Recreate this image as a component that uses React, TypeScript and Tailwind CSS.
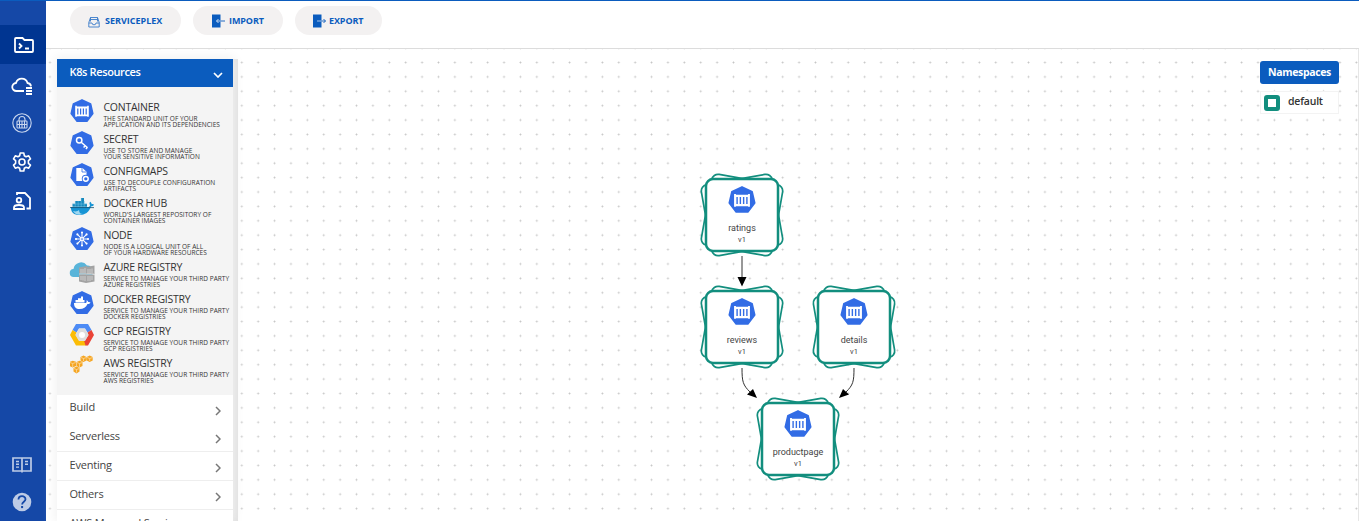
import React from 'react';

const F = "font-['Open_Sans',sans-serif]";

function Heptagon({ children, className }: { children?: React.ReactNode; className: string }) {
  return (
    <svg viewBox="0 0 24 24" className={className}>
      <path d="M12 .8 20.700 5 22.900 14.600 17 22.300H7L1.100 14.600 3.300 5Z" fill="#326ce5" stroke="#326ce5" strokeWidth="1.4" strokeLinejoin="round" />
      {children}
    </svg>
  );
}

function ContainerIcon({ className }: { className: string }) {
  return (
    <Heptagon className={className}>
      <path d="M5.200 6.800h1.600v.7h10.400v-.7h1.600V17.800h-1.600v-.5H6.800v.5H5.200Z" fill="#fff" />
      <path d="M7.800 9.500v6M10.600 9.500v6M13.400 9.500v6M16.200 9.500v6" stroke="#326ce5" strokeWidth="1.200" />
    </Heptagon>
  );
}

function Whale() {
  return (
    <svg viewBox="0 0 24 24" className="size-6">
      <path d="M1 12h17c1 0 2-.5 2-2-.7-1-.8-2 .2-3.200 1 .8 1.400 1.600 1.500 2.400 1-.2 1.800 0 2.300.5-.6 1.300-1.600 1.700-3 1.700C19 17 15 20 9.500 20 4 20 .6 17.500 1 12Z" fill="#1794d4" />
      <path d="M2.500 8.800h14.500v3H2.500ZM5.200 6h9v2.800h-9ZM11 3h3v3h-3Z" fill="#1689bd" />
      <path d="M5.200 6v6M8.200 6v6M11.200 3v9M14.200 6v6M2 9h15" stroke="#8ed0ee" strokeWidth=".4" />
      <path d="M0 12.600h24" stroke="#164e6d" strokeWidth=".8" />
      <path d="M3 16c3 1 5 0 6-1 0 3 2 4 4 4-5 2-8 0-10-3Z" fill="#9ed7f1" />
    </svg>
  );
}

function ResourceIcon({ kind }: { kind: string }) {
  if (kind === 'CONTAINER') return <ContainerIcon className="size-6" />;
  if (kind === 'DOCKER HUB') return <Whale />;
  if (kind === 'SECRET')
    return (
      <Heptagon className="size-6">
        <g fill="none" stroke="#fff" strokeWidth="1.500">
          <circle cx="9.200" cy="9.200" r="2.700" />
          <path d="m11.200 11.200 6.400 5.600M15.200 14.700l-1.600 1.700M17.200 16.500l-1.300 1.400" />
        </g>
      </Heptagon>
    );
  if (kind === 'CONFIGMAPS')
    return (
      <Heptagon className="size-6">
        <path d="M6.300 5h6.200l4 3.800V18H6.300Z" fill="#fff" />
        <path d="M12 5v4h4" fill="none" stroke="#326ce5" strokeWidth=".8" />
        <circle cx="15.800" cy="15.800" r="4" fill="#326ce5" />
        <circle cx="15.800" cy="15.800" r="2.400" fill="none" stroke="#fff" strokeWidth="1.500" />
      </Heptagon>
    );
  if (kind === 'NODE')
    return (
      <Heptagon className="size-6">
        <g stroke="#fff" strokeWidth="1.100" fill="#fff">
          <path d="M12 5v14M5.500 12h13M7.400 7.400l9.200 9.200M16.600 7.400l-9.200 9.200" />
          <circle cx="12" cy="12" r="1.400" fill="#326ce5" />
          <circle cx="12" cy="5.500" r=".5" /><circle cx="12" cy="18.500" r=".5" />
          <circle cx="6" cy="12" r=".5" /><circle cx="18" cy="12" r=".5" />
          <circle cx="7.400" cy="7.400" r=".5" /><circle cx="16.600" cy="7.400" r=".5" />
          <circle cx="7.400" cy="16.600" r=".5" /><circle cx="16.600" cy="16.600" r=".5" />
        </g>
      </Heptagon>
    );
  if (kind === 'AZURE REGISTRY')
    return (
      <svg viewBox="0 0 24 24" className="h-6 w-6 overflow-visible">
        <path d="M4 18a4 4 0 0 1-.5-8A7.500 7.500 0 0 1 17 6.500a5 5 0 0 1 5.500 5V18Z" fill="#59b4d9" />
        <path d="m9 8.500 8-1.500v7.500H9ZM16 8l8.500-1.500v8.500H16ZM9 15.500l7-.5v9l-7-1.500ZM16 15.500h8.500v7L16 24Z" fill="#a3a3a3" />
        <path d="M11 10v4.500M13 10v4.500M15 9v5.500M18 10v5M20 10v5M22 9.500v5M11 17v4M13 17v4.500M15 17v5M18 17v5M20 17v5M22 17v4M9 15h15" stroke="#e2e2e2" strokeWidth=".7" />
      </svg>
    );
  if (kind === 'DOCKER REGISTRY')
    return (
      <Heptagon className="size-6">
        <path d="M4 12h11.500c1 0 1.500-1.500 1-2.800 1 .3 1.600 1 1.700 1.800 1-.2 1.800 0 2.300.4-.6 1.400-1.600 1.600-3 1.600C16 16.500 13.500 18 9.500 18 6 18 4 16 4 12ZM5.500 9h9v2.500h-9ZM8 7.200h4.500V9H8ZM11 5.500h2V9h-2Z" fill="#fff" />
      </Heptagon>
    );
  if (kind === 'GCP REGISTRY')
    return (
      <svg viewBox="0 0 24 24" className="size-6">
        <path d="M6 1h12l3.500 6-4 2.500-2.500-4H9L6.500 9.500 2.500 7Z" fill="#4c8bf5" />
        <path d="m2.500 7 4 2.500L5.500 12 9 17.500h6l1.500 5H6L0 12Z" fill="#fbbc05" />
        <path d="m21.500 7 2.500 5-6 10.500h-2.500L14 17.500h1l3.500-5.500-1-2.500Z" fill="#ea4335" />
        <path d="M9 5.500h6l3.500 6.500-3.500 6H9L5.500 12Z" fill="#dedede" />
        <circle cx="12" cy="12" r="3" fill="#fff" />
      </svg>
    );
  return (
    <svg viewBox="0 0 24 24" className="size-6">
      <path d="m-.5 7 3.300-1.200L6 6.800V11l-3.300 1.500L-.5 11ZM6.500 7l3-1.200 3 1V11l-3 1.500-3-1.500ZM3.500 13l3-1.500 3 1.500v3.500l-3 2-3-2ZM10.500 2l3-1.500 3 1.500v3.500l-3 1.500-3-1.500ZM16.700 2l3-1.500 3 1.500v3.500l-3 1.500-3-1.500Z" fill="#f5a623" />
      <path d="m0 7.500 2.700 1 3-1M2.700 8.500V12M7 7.500l2.500 1 3-1M9.500 8.500V12M4 13.500l2.500 1 3-1M6.500 14.500v3M11 2.500l2.500 1 3-1M13.500 3.500V6M17.200 2.500l2.500 1 3-1M19.700 3.500V6" fill="none" stroke="#fce0b2" strokeWidth=".7" />
    </svg>
  );
}

const resources: [string, string, string][] = [
  ['CONTAINER', 'THE STANDARD UNIT OF YOUR', 'APPLICATION AND ITS DEPENDENCIES'],
  ['SECRET', 'USE TO STORE AND MANAGE', 'YOUR SENSITIVE INFORMATION'],
  ['CONFIGMAPS', 'USE TO DECOUPLE CONFIGURATION', 'ARTIFACTS'],
  ['DOCKER HUB', "WORLD'S LARGEST REPOSITORY OF", 'CONTAINER IMAGES'],
  ['NODE', 'NODE IS A LOGICAL UNIT OF ALL', 'OF YOUR HARDWARE RESOURCES'],
  ['AZURE REGISTRY', 'SERVICE TO MANAGE YOUR THIRD PARTY', 'AZURE REGISTRIES'],
  ['DOCKER REGISTRY', 'SERVICE TO MANAGE YOUR THIRD PARTY', 'DOCKER REGISTRIES'],
  ['GCP REGISTRY', 'SERVICE TO MANAGE YOUR THIRD PARTY', 'GCP REGISTRIES'],
  ['AWS REGISTRY', 'SERVICE TO MANAGE YOUR THIRD PARTY', 'AWS REGISTRIES'],
];

function SideNav() {
  return (
    <nav className="flex w-[46px] shrink-0 flex-col items-center bg-[#1548a7] pr-[2px] text-white">
      <div className="h-6 shrink-0" />
      <div className="-mr-[2px] flex h-[39px] w-[46px] shrink-0 items-center justify-center bg-[#003591] pl-[2px]">
        <svg viewBox="0 0 20 16" className="h-4 w-5" fill="none" stroke="currentColor" strokeWidth="1.800">
          <path d="M1 2.500V14c0 .6.400 1 1 1h16c.6 0 1-.4 1-1V4c0-.6-.4-1-1-1h-7.500L8.500 1H2C1.400 1 1 1.400 1 2ZM5 6.500 7.500 9 5 11.500M11 11.500h4" />
        </svg>
      </div>
      <div className="flex h-[43px] shrink-0 items-center">
        <svg viewBox="0 0 22 18" className="h-[18px] w-[22px]" fill="none" stroke="currentColor" strokeWidth="1.800">
          <path d="M13 14H5.500a4 4 0 0 1-.5-8A6 6 0 0 1 16.500 6c2 .2 3.300 1.500 3.500 3.300" />
          <path d="M15 11h6M15 14h6M15 17h6" />
        </svg>
      </div>
      <div className="flex h-[31px] shrink-0 items-center">
        <svg viewBox="0 0 20 20" className="size-5" fill="none" stroke="#c9d6ee" strokeWidth="1.100">
          <circle cx="10" cy="10" r="9.200" />
          <path d="M7 8V6.500a3 3 0 0 1 6 0V8" />
          <rect x="5" y="8" width="10" height="7" rx=".8" />
          <path d="M5 11.500h10M7.500 8v7M10 8v7M12.500 8v7" />
        </svg>
      </div>
      <div className="flex h-[48px] shrink-0 items-center">
        <svg viewBox="0 0 20 20" className="size-5" fill="none" stroke="currentColor" strokeWidth="1.600" strokeLinejoin="round">
          <path d="M8.200 1h3.600l.5 2.700 1.800 1 2.600-.9 1.800 3.100-2.100 1.800v2.600l2.100 1.800-1.800 3.100-2.600-.9-1.800 1-.5 2.700H8.200l-.5-2.700-1.800-1-2.600.9-1.800-3.100 2.100-1.800V8.700L1.500 6.900l1.800-3.100 2.600.9 1.800-1Z" />
          <circle cx="10" cy="10" r="3" />
        </svg>
      </div>
      <div className="flex h-[30px] shrink-0 items-center">
        <svg viewBox="0 0 18 18" className="size-[18px]" fill="none" stroke="currentColor" strokeWidth="1.800">
          <path d="M4 3V1h8l5 5v10.500h-3.500" />
          <circle cx="6" cy="8.200" r="2.300" />
          <path d="M1 17v-1.500c0-1.500 2.500-2.500 5-2.500s5 1 5 2.500V17Z" />
        </svg>
      </div>
      <div className="grow" />
      <svg viewBox="0 0 20 16" className="mb-[19px] h-4 w-5 shrink-0" fill="none" stroke="#bdcbe6" strokeWidth="1.700">
        <path d="M1 1h18v13H1ZM10 1v14.500" />
        <path d="M4 4.500h3M4 7.300h3M4 10.100h3M13 4.500h3M13 7.300h3" strokeWidth="1.400" />
      </svg>
      <svg viewBox="0 0 20 20" className="mb-[9px] size-5 shrink-0">
        <circle cx="10" cy="10" r="9.300" fill="#bdcbe6" />
        <path d="M6.500 7.600c0-4.600 7-4.300 7-.4 0 2.400-3.400 2.600-3.400 5.300" fill="none" stroke="#1548a7" strokeWidth="1.800" />
        <path d="M10.100 14v2.100" stroke="#1548a7" strokeWidth="2" />
      </svg>
    </nav>
  );
}

function PillIcon({ kind }: { kind: string }) {
  if (kind === 'SERVICEPLEX')
    return (
      <svg viewBox="0 0 12 12" className="mt-[2px] h-3 w-3" fill="none" stroke="#3b7cca" strokeWidth=".9">
        <path d="M.8 6.500 2.500 1.500h7l1.700 5v4.500H.8ZM.8 7H4l.8 1.700h2.400L8 7h3.200M2.500 1.500v4M9.500 1.500v4M2.500 3.500h7" />
      </svg>
    );
  const out = kind === 'EXPORT';
  return (
    <svg viewBox="0 0 13 14" className="h-[14px] w-[13px]" fill="none">
      <path d="M0 .5h8.500v13H0Z" fill="#0b5cbe" />
      {out ? (
        <><path d="M4 7h4.500" stroke="#b8d0ee" strokeWidth=".9" /><path d="M8.500 7h4M10.500 5l2 2-2 2" stroke="#0b5cbe" strokeWidth=".9" /></>
      ) : (
        <><path d="M4.500 7h4M6.500 5l-2 2 2 2" stroke="#d4e3f6" strokeWidth=".9" /><path d="M8.500 7H13" stroke="#0b5cbe" strokeWidth=".9" /></>
      )}
    </svg>
  );
}

const nodes = [
  { name: 'ratings', x: 742, y: 215 },
  { name: 'reviews', x: 742, y: 327 },
  { name: 'details', x: 854, y: 327 },
  { name: 'productpage', x: 798, y: 439 },
];

function ServiceNode({ name, x, y }: { name: string; x: number; y: number }) {
  return (
    <div className="absolute size-[84px]" style={{ left: x - 46 - 42, top: y - 49 - 42 }}>
      <svg viewBox="-42 -42 84 84" className="absolute inset-0 size-[84px] overflow-visible" stroke="#128e7e">
        <rect x="-36" y="-36" width="72" height="72" rx="6.500" fill="#fff" strokeWidth="1.700" transform="rotate(10)" />
        <rect x="-36" y="-36" width="72" height="72" rx="6.500" fill="#fff" strokeWidth="1.700" transform="rotate(-10)" />
        <rect x="-36" y="-36" width="72" height="72" rx="7" fill="#fff" strokeWidth="2.500" />
      </svg>
      <div className="relative flex flex-col items-center pt-[13px] font-['Roboto',sans-serif] text-[#444]">
        <ContainerIcon className="size-7" />
        <span className="mt-[8px] text-[9px] leading-3">{name}</span>
        <span className="text-[7.500px] leading-[11px]">v1</span>
      </div>
    </div>
  );
}

export default function App() {
  return (
    <div className={`flex h-[521px] w-[1359px] overflow-hidden border-t border-[#0b5cbe] bg-white ${F}`}>
      <SideNav />
      <main className="flex min-w-0 grow flex-col">
        <header className="flex h-12 shrink-0 items-start gap-3 border-b border-[#dcdcdc] pl-6 pt-[5px]">
          {['SERVICEPLEX', 'IMPORT', 'EXPORT'].map((t, i) => (
            <button key={t} className={`flex h-[29px] items-center rounded-full bg-[#f3f1f1] text-[9px] font-bold text-[#0b5cbe] ${i === 0 ? 'w-[111px] gap-[5px] pl-[18px]' : i === 1 ? 'w-[90px] gap-1 pl-[19px] tracking-[-0.1px]' : 'w-[87px] gap-[3px] pl-[18px] tracking-[-0.1px]'}`}>
              <PillIcon kind={t} />
              {t}
            </button>
          ))}
        </header>
        <div className="relative flex min-h-0 grow border-r border-[#e6e6e6] bg-[radial-gradient(circle,#c4c4c4_0.8px,transparent_1.100px)] bg-[length:16.400px_14.400px] bg-[position:7.300px_6.300px]">
          <div className="w-[11px] shrink-0 bg-white bg-[radial-gradient(circle,#c4c4c4_0.8px,transparent_1.100px)] bg-[length:16.400px_14.400px] bg-[position:-4.200px_6.300px]" />
          <aside className="mt-[10px] flex w-[181px] shrink-0 border-r-[5px] border-[#dedede]">
            <div className="flex min-w-0 grow flex-col overflow-hidden bg-white shadow-[0_0_10px_2px_#f2f2f2]">
              <div className="flex h-7 shrink-0 items-center justify-between bg-[#0b5cbe] px-[12.500px] text-[11px] font-semibold tracking-[-0.370px] text-white">
                <span className="pb-[2px]">K8s Resources</span>
                <svg viewBox="0 0 10 6" className="mt-1 mr-[-2px] h-[6px] w-[10px]" fill="none" stroke="currentColor" strokeWidth="1.700"><path d="m1 1 4 4 4-4" /></svg>
              </div>
              <div className="h-[308px] shrink-0 bg-[#f4f4f4] pt-3">
                {resources.map(([t, a, b]) => (
                  <div key={t} className="flex h-8 gap-[9.500px] whitespace-nowrap pl-[13px] text-[#333]">
                    <ResourceIcon kind={t} />
                    <div className="pt-[2px]">
                      <div className="pb-[2px] text-[10.500px] leading-[12.500px] tracking-[-0.250px]">{t}</div>
                      <div className="text-[6.500px] leading-[6.500px] tracking-[0.030px]">{a}<br />{b}</div>
                    </div>
                  </div>
                ))}
              </div>
              {['Build', 'Serverless', 'Eventing', 'Others', 'AWS Managed Services'].map((t, i) => (
                <div key={t} className={`flex shrink-0 items-center justify-between whitespace-nowrap px-[12.500px] text-[11px] text-[#444] ${i === 0 ? 'h-7 tracking-[-0.100px]' : 'h-[29px] border-b border-[#eeeeee] tracking-[-0.200px]'}`}>
                  <span className={i === 0 ? 'pb-[3px]' : 'pb-[1px]'}>{t}</span>
                  <svg viewBox="0 0 6 10" className="mt-1 h-[10px] w-[6px]" fill="none" stroke="#777" strokeWidth="1.500"><path d="m1 1 4 4-4 4" /></svg>
                </div>
              ))}
            </div>
          </aside>
          <svg viewBox="46 49 1313 472" className="pointer-events-none absolute left-0 top-0 h-[472px] w-[1313px]">
            <path d="M742 256v22M742 368c0 14 1 17 8 24M854 368c0 14-1 17-8 24" fill="none" stroke="#333" />
            <path d="m737.500 277 4.500 9.500 4.500-9.500ZM757 398l-10-3.500 6-5.500ZM839 398l10-3.500-6-5.500Z" fill="#000" />
          </svg>
          {nodes.map((n) => <ServiceNode key={n.name} {...n} />)}
          <div className="ml-auto mr-[19px] mt-[12px] w-[79px] shrink-0">
            <div className="flex h-[23px] items-center justify-center rounded-[3px] bg-[#0b5cbe] text-[10.500px] font-bold tracking-[-0.350px] text-white">Namespaces</div>
            <div className="mt-[7px] flex h-[23px] items-center gap-[8px] border border-[#f3f3f3] bg-white pl-[3px] text-[10.500px] font-semibold tracking-[-0.200px] text-[#333]">
              <span className="size-4 rounded-[3px] border-4 border-[#128e7e] bg-white" />
              <span className="pb-[2px]">default</span>
            </div>
          </div>
        </div>
      </main>
    </div>
  );
}
